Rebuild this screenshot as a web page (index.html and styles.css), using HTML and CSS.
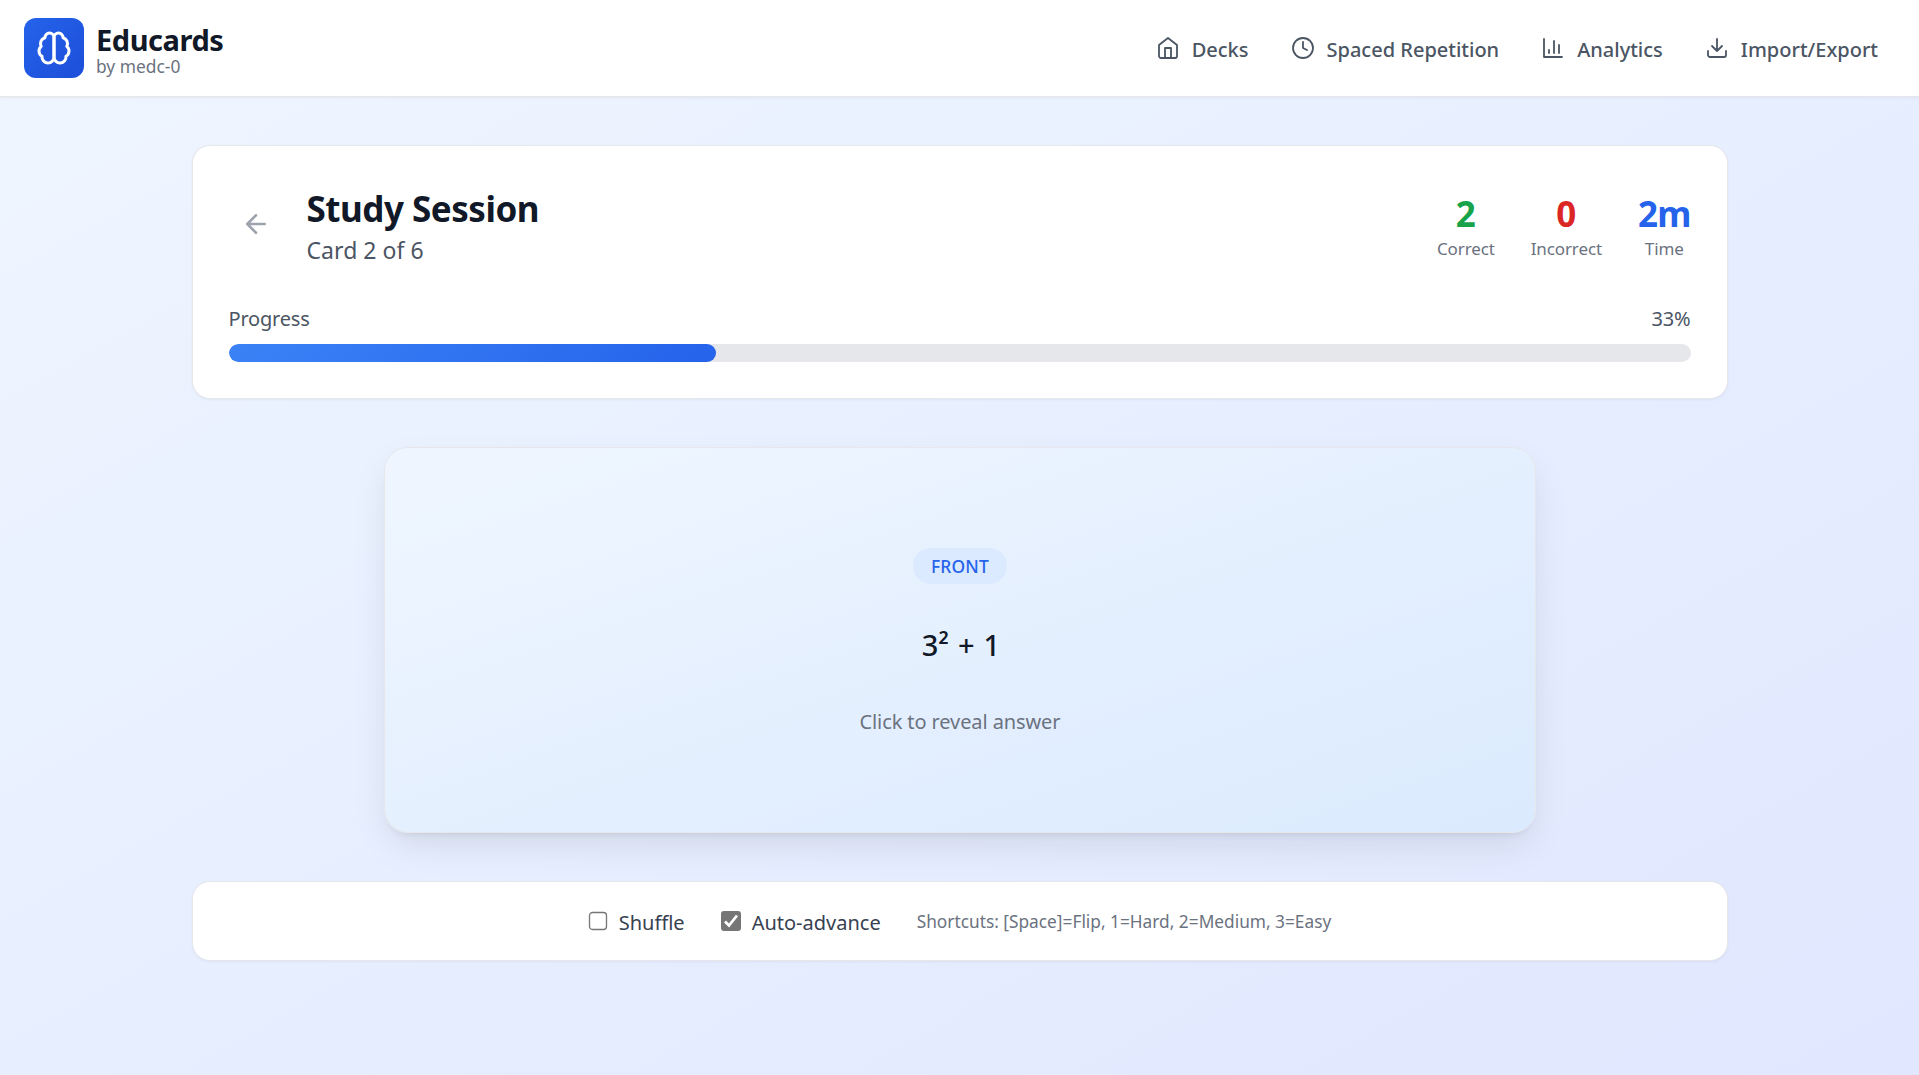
FILE: index.html
```
<!DOCTYPE html>
<html lang="en">
<head>
<meta charset="utf-8">
<title>Educards</title>
<link rel="stylesheet" href="styles.css">
</head>
<body>
<header class="topbar">
  <div class="brand">
    <div class="logo">
      <svg viewBox="0 0 24 24" width="36" height="36" fill="none" stroke="currentColor" stroke-width="2" stroke-linecap="round" stroke-linejoin="round"><path d="M12 5a3 3 0 1 0-5.997.125 4 4 0 0 0-2.526 5.77 4 4 0 0 0 .556 6.588A4 4 0 1 0 12 18Z"/><path d="M12 5a3 3 0 1 1 5.997.125 4 4 0 0 1 2.526 5.77 4 4 0 0 1-.556 6.588A4 4 0 1 1 12 18Z"/></svg>
    </div>
    <div class="brand-text">
      <h1 class="brand-name">Educards</h1>
      <p class="brand-by">by medc-0</p>
    </div>
  </div>
  <nav class="nav">
    <a class="nav-link"><svg class="icon" viewBox="0 0 24 24"><path d="m3 9 9-7 9 7v11a2 2 0 0 1-2 2H5a2 2 0 0 1-2-2z"/><path d="M9 22V12h6v10"/></svg><span>Decks</span></a>
    <a class="nav-link"><svg class="icon" viewBox="0 0 24 24"><circle cx="12" cy="12" r="10"/><path d="M12 6v6l4 2"/></svg><span>Spaced Repetition</span></a>
    <a class="nav-link"><svg class="icon" viewBox="0 0 24 24"><path d="M3 3v18h18M18 17V9M13 17V5M8 17v-3"/></svg><span>Analytics</span></a>
    <a class="nav-link"><svg class="icon" viewBox="0 0 24 24"><path d="M21 15v4a2 2 0 0 1-2 2H5a2 2 0 0 1-2-2v-4M7 10l5 5 5-5M12 15V3"/></svg><span>Import/Export</span></a>
  </nav>
</header>
<main class="page">
  <section class="panel session">
    <div class="session-head">
      <button class="back" aria-label="Back"><svg class="icon-back" viewBox="0 0 24 24"><path d="m12 19-7-7 7-7M19 12H5"/></svg></button>
      <div class="session-title">
        <h2 class="title">Study Session</h2>
        <p class="subtitle">Card 2 of 6</p>
      </div>
      <div class="stats">
        <div class="stat"><div class="stat-value green">2</div><div class="stat-label">Correct</div></div>
        <div class="stat"><div class="stat-value red">0</div><div class="stat-label">Incorrect</div></div>
        <div class="stat"><div class="stat-value blue">2m</div><div class="stat-label">Time</div></div>
      </div>
    </div>
    <div class="progress-label"><span>Progress</span><span>33%</span></div>
    <div class="track"><div class="fill" style="width: 33.333%"></div></div>
  </section>
  <section class="flashcard">
    <div class="side">FRONT</div>
    <div class="question">3² + 1</div>
    <div class="hint">Click to reveal answer</div>
  </section>
  <section class="panel options">
    <label class="option"><svg class="box" viewBox="0 0 20 20"><rect x="1.5" y="1.5" width="17" height="17" rx="3" fill="#fff" stroke="#767676" stroke-width="1.3"/></svg><span>Shuffle</span></label>
    <label class="option"><svg class="box" viewBox="0 0 20 20"><rect width="20" height="20" rx="3" fill="#767676"/><path d="M4 10.5l4 4L16 4.5" fill="none" stroke="#fff" stroke-width="2.8"/></svg><span>Auto-advance</span></label>
    <p class="shortcuts">Shortcuts: [Space]=Flip, 1=Hard, 2=Medium, 3=Easy</p>
  </section>
</main>
</body>
</html>
```
FILE: styles.css
```
* { box-sizing: border-box; margin: 0; padding: 0; }
body {
  min-height: 100vh;
  background: linear-gradient(to bottom right, #eff6ff, #e0e7ff);
  font-family: "Noto Sans", "Open Sans", sans-serif;
  color: #111827;
}
.topbar {
  display: flex;
  justify-content: space-between;
  align-items: center;
  height: 97px;
  padding: 0 23px 0 24px;
  background: #fff;
  border-bottom: 1px solid #e5e7eb;
  box-shadow: 0 1px 3px rgba(0, 0, 0, .05);
}
.brand { display: flex; align-items: center; gap: 12px; }
.logo {
  display: flex;
  align-items: center;
  justify-content: center;
  width: 60px;
  height: 60px;
  border-radius: 12px;
  background: linear-gradient(135deg, #2563eb, #1d4ed8);
  color: #fff;
}
.brand-text { padding-top: 3px; }
.brand-name { font-size: 29px; font-weight: 700; line-height: 32px; letter-spacing: -.45px; }
.brand-by { font-size: 17.4px; line-height: 20px; color: #6b7280; }
.nav { display: flex; gap: 6px; }
.nav-link {
  display: flex;
  align-items: center;
  gap: 12px;
  padding: 0 18px;
  font-size: 20px;
  font-weight: 500;
  line-height: 30px;
  color: #4b5563;
}
.nav-link span, .option span { padding-top: 3px; }
.icon, .icon-back {
  width: 24px;
  height: 24px;
  fill: none;
  stroke: currentColor;
  stroke-width: 1.8;
  stroke-linecap: round;
  stroke-linejoin: round;
}
.page { width: 1536px; margin: 0 auto; padding-top: 48px; }
.panel {
  background: #fff;
  border: 1px solid #e5e7eb;
  border-radius: 18px;
  box-shadow: 0 1px 3px rgba(0, 0, 0, .05);
}
.session { height: 254px; padding: 36px; }
.session-head { display: flex; align-items: center; height: 84px; margin-bottom: 36px; }
.back { display: flex; padding: 12px; margin-right: 24px; border: 0; background: none; color: #9ca3af; }
.icon-back { width: 30px; height: 30px; stroke-width: 2; }
.title { font-size: 35px; font-weight: 700; line-height: 52px; letter-spacing: -.48px; }
.subtitle { font-size: 23px; line-height: 30px; letter-spacing: .05px; color: #4b5563; }
.session-title { padding-bottom: 1px; }
.stats { display: flex; gap: 36px; margin-left: auto; padding-top: 5px; text-align: center; }
.stat-value { font-size: 35px; font-weight: 700; line-height: 44px; }
.stat-label { font-size: 17px; line-height: 26px; letter-spacing: -.12px; color: #6b7280; }
.green { color: #16a34a; }
.red { color: #dc2626; }
.blue { color: #2563eb; letter-spacing: -.8px; }
.progress-label {
  display: flex;
  justify-content: space-between;
  padding-top: 1px;
  margin-bottom: 9px;
  font-size: 20px;
  line-height: 32px;
  letter-spacing: -.2px;
  color: #4b5563;
}
.track { height: 18px; border-radius: 9px; background: #e5e7eb; overflow: hidden; }
.fill { height: 100%; border-radius: 9px; background: linear-gradient(135deg, #3b82f6, #2563eb); }
.flashcard {
  display: flex;
  flex-direction: column;
  align-items: center;
  width: 1152px;
  height: 386px;
  margin: 48px auto;
  padding: 100px 0 0 1px;
  border: 1px solid #e5e7eb;
  border-radius: 24px;
  background: linear-gradient(to bottom right, #eff6ff, #dbeafe);
  box-shadow: 0 15px 37px -5px rgba(0, 0, 0, .1), 0 6px 9px -6px rgba(0, 0, 0, .1);
}
.side {
  padding: 0 18px;
  border-radius: 18px;
  background: #dbeafe;
  font-size: 17.4px;
  font-weight: 500;
  line-height: 36px;
  letter-spacing: .2px;
  color: #2563eb;
}
.question { margin-top: 38px; padding-left: 2px; font-size: 29px; font-weight: 500; line-height: 45px; word-spacing: 1.5px; }
.hint { margin-top: 39px; font-size: 20px; line-height: 32px; letter-spacing: -.1px; color: #6b7280; }
.options { display: flex; align-items: center; justify-content: center; gap: 36px; height: 80px; }
.option { display: flex; align-items: center; gap: 11px; font-size: 20px; line-height: 30px; color: #374151; }
.box { width: 20px; height: 20px; }
.shortcuts { padding-top: 1px; font-size: 17.3px; line-height: 26px; color: #6b7280; }
```
